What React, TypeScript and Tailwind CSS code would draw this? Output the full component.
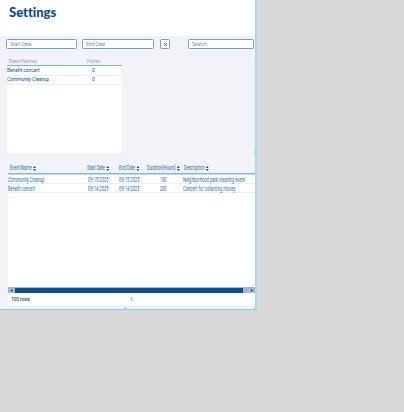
import React from 'react';

const font = "font-['Roboto','Liberation_Sans',sans-serif]";

function Field({ label, className }: { label: string; className: string }) {
  return (
    <div className={`flex h-[10px] items-center rounded-[1.5px] border border-[#6f9fcd] bg-white pl-[3px] text-[5px] tracking-[-0.1px] text-[#8b8f94] ${className}`}>
      {label}
    </div>
  );
}

function Heading({ label, className }: { label: string; className: string }) {
  return (
    <span className={`flex origin-left scale-x-[0.62] items-center ${className}`}>
      {label}
      <svg className="ml-[2px] h-[5px] w-[5px] shrink-0" viewBox="0 0 3 5" preserveAspectRatio="none" fill="#175591">
        <path d="M0 2L1.5 0L3 2ZM0 3L1.5 5L3 3Z" />
      </svg>
    </span>
  );
}

function Handle({ className }: { className: string }) {
  return <div className={`absolute size-[3px] rounded-full border border-[#76c9ee] bg-[#dff4fd] ${className}`} />;
}

const points = [
  { name: 'Benefit concert', value: 0, tracking: 'tracking-[-0.1px]' },
  { name: 'Community Cleanup', value: 0, tracking: 'tracking-[-0.18px]' },
];

const events = [
  { name: 'Community Cleanup', date: '09/15/2025', hours: 180, text: 'Neighborhood park cleaning event' },
  { name: 'Benefit concert', date: '09/14/2025', hours: 300, text: 'Concert for collecting money' },
];

const columns = 'grid grid-cols-[75px_32px_28px_40px_1fr]';

export default function App() {
  return (
    <div className={`h-[412px] w-[404px] overflow-hidden bg-[#d8d8d8] leading-none ${font}`}>
      <main className="relative flex h-[310px] w-[257px] flex-col border-r-2 border-b border-r-[#a9d9ef] border-b-[#86cff0] bg-[#f1f3f8]">
        <header className="h-9 shrink-0 bg-white pt-[4px] pl-[9px]">
          <h1 className="font-['Lato',sans-serif] text-[13px] leading-4 font-black text-[#0b4a8b] [font-variant-ligatures:none]">Settings</h1>
        </header>

        <div className="flex h-[20px] shrink-0 pt-[3px] pl-[6px]">
          <Field label="Start Date" className="w-[71px]" />
          <Field label="End Date" className="ml-[5px] w-[72px]" />
          <button className="ml-[6px] flex h-[10px] w-[10px] items-center justify-center rounded-[1.5px] border border-[#6f9fcd] bg-white">
            <svg className="size-[3px]" viewBox="0 0 3 3" stroke="#3977ac" strokeWidth=".9"><path d="M0 0L3 3M3 0L0 3" /></svg>
          </button>
          <Field label="Search" className="ml-[18px] w-[66px]" />
        </div>

        <section className="ml-[7px] flex h-[97px] w-[115px] shrink-0 flex-col text-[5px] text-[#175782]">
          <div className="grid h-[10px] shrink-0 grid-cols-[72px_1fr] items-center border-b border-[#7bb1e2] text-[#9da8b7]">
            <span className="pt-[1px] pl-[2px] tracking-[-0.1px]">Event Names</span>
            <span className="pt-[1px] pl-[8px] tracking-[-0.1px]">Points</span>
          </div>
          <div className="flex-1 bg-white">
            {points.map((row) => (
              <div key={row.name} className="grid h-[9.5px] grid-cols-[72px_1fr] items-center border-b border-[#edf0f2]">
                <span className={row.tracking}>{row.name}</span>
                <span className="pl-[13px]">{row.value}</span>
              </div>
            ))}
          </div>
        </section>

        <section className="mt-[8px] ml-[8px] flex h-[144px] shrink-0 flex-col text-[6.5px] text-[#276da5]">
          <div className={`${columns} h-[13px] shrink-0 items-center whitespace-nowrap border-b border-[#7bb8ec] pt-[2px]`}>
            <Heading label="Event Name" className="ml-[2px]" />
            <Heading label="Start Date" className="ml-[4px]" />
            <Heading label="End Date" className="ml-[4px]" />
            <Heading label="Duration(Hours)" className="ml-[4px]" />
            <Heading label="Description" className="ml-[1px]" />
          </div>
          <div className="flex-1 border-t border-[#bcdaf4] bg-white">
            {events.map((row) => (
              <div key={row.name} className={`${columns} h-[9px] items-center whitespace-nowrap border-b border-[#eceff2] pt-[1.5px]`}>
                <span className="origin-left scale-x-[0.62]">{row.name}</span>
                <span className="ml-[5px] origin-left scale-x-[0.59]">{row.date}</span>
                <span className="ml-[4px] origin-left scale-x-[0.59]">{row.date}</span>
                <span className="ml-[17px] origin-left scale-x-[0.59]">{row.hours}</span>
                <span className="origin-left scale-x-[0.63]">{row.text}</span>
              </div>
            ))}
          </div>
          <div className="flex h-[6px] shrink-0 items-center bg-[#9fb9d5]">
            <svg className="h-[3px] w-[7px]" viewBox="0 0 7 3" fill="#174f83"><path d="M4.5 0L2.5 1.5L4.5 3Z" /></svg>
            <div className="h-[5px] flex-1 bg-[#0b4f90]" />
            <svg className="h-[3px] w-[12px]" viewBox="0 0 12 3" fill="#174f83"><path d="M8 0L10 1.5L8 3Z" /></svg>
          </div>
          <footer className="grid h-[12px] shrink-0 grid-cols-[122px_1fr] items-center bg-white text-[5px] text-[#222b33]">
            <span className="pl-[3px] tracking-[-0.2px]">100 rows</span>
            <span className="font-bold text-[#36a6d7]">1</span>
          </footer>
        </section>

        <Handle className="top-[151px] -right-[2px]" />
        <Handle className="-bottom-[1px] left-[124px]" />
        <Handle className="-right-[2px] -bottom-[1px]" />
      </main>
    </div>
  );
}
